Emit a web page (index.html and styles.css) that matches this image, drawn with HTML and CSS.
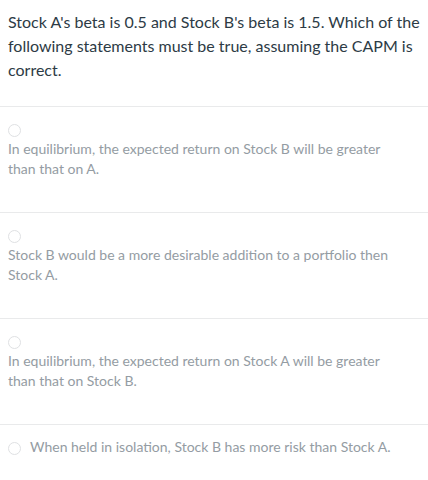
FILE: index.html
```html
<!DOCTYPE html>
<html>
<head>
<meta charset="utf-8">
<link rel="stylesheet" href="styles.css">
</head>
<body>
<div class="quiz">
  <div class="question">Stock A's beta is 0.5 and Stock B's beta is 1.5. Which of the following statements must be true, assuming the CAPM is correct.</div>
  <div class="answer"><span class="radio"></span><span class="label">In equilibrium, the expected return on Stock B will be greater than that on A.</span></div>
  <div class="answer"><span class="radio"></span><span class="label">Stock B would be a more desirable addition to a portfolio then Stock A.</span></div>
  <div class="answer"><span class="radio"></span><span class="label">In equilibrium, the expected return on Stock A will be greater than that on Stock B.</span></div>
  <div class="answer"><span class="radio"></span><span class="label">When held in isolation, Stock B has more risk than Stock A.</span></div>
</div>
</body>
</html>
```
FILE: styles.css
```css
html, body {
  margin: 0;
  padding: 0;
  background: #fff;
}
.quiz {
  font-family: Lato, "Open Sans", sans-serif;
}
.question {
  padding: 10px 8px 24px 8px;
  font-size: 16px;
  line-height: 24px;
  color: #2d3b45;
}
.answer {
  border-top: 1px solid #e9eaeb;
  padding: 12px 24px 33px 8px;
  font-size: 14px;
  line-height: 20px;
  color: #949ca3;
}
.radio {
  display: inline-block;
  box-sizing: border-box;
  width: 13px;
  height: 13px;
  border: 1px solid #dfe1e3;
  border-radius: 50%;
  vertical-align: middle;
  margin-right: 9px;
  background: #fff;
}
.label {
  display: inline-block;
  vertical-align: baseline;
}
```
